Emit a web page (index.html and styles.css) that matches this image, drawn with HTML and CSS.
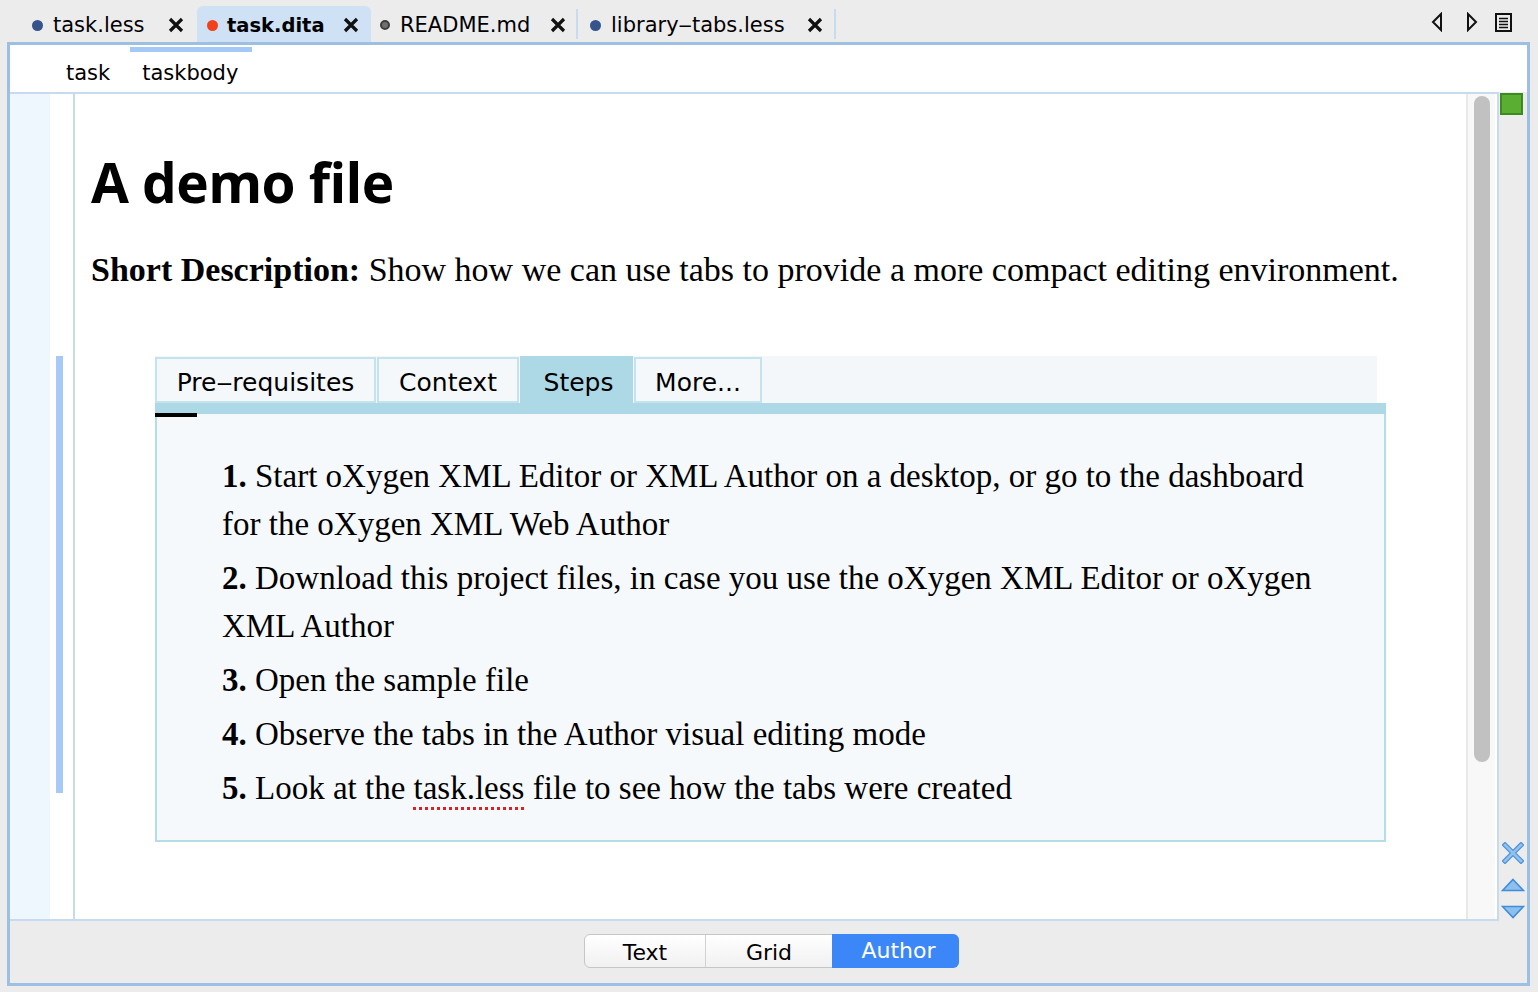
FILE: index.html
```html
<!DOCTYPE html>
<html>
<head>
<meta charset="utf-8">
<link rel="stylesheet" href="styles.css">
</head>
<body>
<div class="topbar">
  <div class="doctabs">
    <div class="doctab t1"><span class="dot dot-blue"></span><span class="name">task.less</span><svg class="close" width="16" height="16" viewBox="0 0 16 16"><path d="M2 2L14 14M14 2L2 14" stroke="#111" stroke-width="3.2"/></svg></div>
    <div class="doctab t2 active"><span class="dot dot-red"></span><span class="name">task.dita</span><svg class="close" width="16" height="16" viewBox="0 0 16 16"><path d="M2 2L14 14M14 2L2 14" stroke="#111" stroke-width="3.2"/></svg></div>
    <div class="doctab t3"><span class="dot dot-gray"></span><span class="name">README.md</span><svg class="close" width="16" height="16" viewBox="0 0 16 16"><path d="M2 2L14 14M14 2L2 14" stroke="#111" stroke-width="3.2"/></svg></div>
    <div class="doctab t4"><span class="dot dot-blue"></span><span class="name">library‒tabs.less</span><svg class="close" width="16" height="16" viewBox="0 0 16 16"><path d="M2 2L14 14M14 2L2 14" stroke="#111" stroke-width="3.2"/></svg></div>
  </div>
  <div class="navicons">
    <svg width="14" height="20" viewBox="0 0 14 20"><path d="M11 2L3 10L11 18Z" fill="none" stroke="#111" stroke-width="2" stroke-linejoin="miter"/></svg>
    <svg width="14" height="20" viewBox="0 0 14 20"><path d="M3 2L11 10L3 18Z" fill="none" stroke="#111" stroke-width="2" stroke-linejoin="miter"/></svg>
    <svg width="17" height="19" viewBox="0 0 17 19"><rect x="1" y="1" width="15" height="17" fill="none" stroke="#111" stroke-width="2"/><path d="M4 5.5H13M4 8.5H13M4 11.5H13M4 14.5H13" stroke="#111" stroke-width="1.6"/></svg>
  </div>
</div>

<div class="frame">
  <div class="crumbs">
    <span class="crumb">task</span>
    <span class="crumb crumb-active">taskbody</span>
  </div>
  <div class="work">
    <div class="maincol">
      <div class="editor">
        <div class="gutter"></div>
        <div class="gutter2"><div class="scope-mark"></div></div>
        <div class="content">
          <h1 class="title">A demo file</h1>
          <p class="shortdesc"><b>Short Description:</b> Show how we can use tabs to provide a more compact editing environment.</p>
          <div class="tabset">
            <div class="tabstrip">
              <div class="ptab ptab-1">Pre‒requisites</div>
              <div class="ptab ptab-2">Context</div>
              <div class="ptab ptab-3 ptab-active">Steps</div>
              <div class="ptab ptab-4">More...</div>
            </div>
            <div class="tabbar"><span class="tabbar-mark"></span></div>
            <div class="panel">
              <ol class="steps">
                <li><b>1.</b> Start oXygen XML Editor or XML Author on a desktop, or go to the dashboard for the oXygen XML Web Author</li>
                <li><b>2.</b> Download this project files, in case you use the oXygen XML Editor or oXygen XML Author</li>
                <li><b>3.</b> Open the sample file</li>
                <li><b>4.</b> Observe the tabs in the Author visual editing mode</li>
                <li><b>5.</b> Look at the <span class="spell">task.less</span> file to see how the tabs were created</li>
              </ol>
            </div>
          </div>
        </div>
        <div class="vscroll"><div class="thumb"></div></div>
      </div>
      <div class="modebar">
        <div class="seg">
          <span class="seg-item seg-text">Text</span>
          <span class="seg-item seg-grid">Grid</span>
          <span class="seg-item seg-author">Author</span>
        </div>
      </div>
    </div>
    <div class="sidepanel">
      <div class="okbox"></div>
      <div class="sideicons">
        <svg class="ico-x" width="22" height="22" viewBox="0 0 22 22"><path d="M3 3L19 19M19 3L3 19" stroke="#4f92d6" stroke-width="5" stroke-linecap="square"/><path d="M3 3L19 19M19 3L3 19" stroke="#90c1ef" stroke-width="2.6" stroke-linecap="square"/></svg>
        <svg class="ico-up" width="24" height="14" viewBox="0 0 24 14"><path d="M12 1.5L22.5 12.5H1.5Z" fill="#8ec0ee" stroke="#3f8cdb" stroke-width="1.6"/></svg>
        <svg class="ico-down" width="24" height="14" viewBox="0 0 24 14"><path d="M1.5 1.5H22.5L12 12.5Z" fill="#8ec0ee" stroke="#3f8cdb" stroke-width="1.6"/></svg>
      </div>
    </div>
  </div>
</div>
</body>
</html>
```

FILE: styles.css
```css
* { box-sizing: border-box; }
html, body { margin: 0; padding: 0; }
body {
  width: 1538px;
  height: 992px;
  overflow: hidden;
  background: #ececec;
  font-family: "DejaVu Sans", sans-serif;
  color: #000;
}

/* ---------- top document tabs ---------- */
.topbar {
  height: 42px;
  display: flex;
  justify-content: space-between;
  align-items: flex-end;
  padding-left: 23px;
  padding-right: 26px;
}
.doctabs { display: flex; align-items: flex-end; height: 42px; }
.doctab {
  height: 36px;
  display: flex;
  align-items: center;
  font-size: 21px;
  position: relative;
  padding-top: 2px;
}
.doctab .name { margin-left: 10px; }
.doctab .close { margin-left: auto; flex: none; }
.t1 { width: 174px; padding-left: 9px; padding-right: 13px; }
.t2 { width: 174px; padding-left: 10px; padding-right: 12px; }
.t3 { width: 207px; padding-left: 9px; padding-right: 10px; border-right: 2px solid #c9dcee; }
.t4 { width: 258px; padding-left: 12px; padding-right: 11px; border-right: 2px solid #c9dcee; }
.t3, .t4 { height: 30px; margin-bottom: 3px; }
.active {
  background: #cfe1f5;
  border-radius: 6px 6px 0 0;
}
.active .name { font-weight: bold; font-size: 19.5px; margin-left: 9px; }
.dot {
  display: block;
  width: 11px;
  height: 11px;
  min-width: 11px;
  border-radius: 50%;
  flex: none;
}
.dot-blue { background: #34548b; }
.dot-red { background: #f2421b; }
.dot-gray { background: #707070; border: 2px solid #3d3d3d; width: 10px; height: 10px; min-width: 10px; }

.navicons {
  display: flex;
  align-items: center;
  height: 42px;
  padding-top: 2px;
}
.navicons svg:nth-child(1) { margin-right: 21px; }
.navicons svg:nth-child(2) { margin-right: 16px; }

/* ---------- main frame ---------- */
.frame {
  margin-left: 7px;
  width: 1523px;
  height: 944px;
  border: 3px solid #9cbfe2;
  display: flex;
  flex-direction: column;
}
.crumbs {
  height: 47px;
  background: #fff;
  display: flex;
  align-items: flex-end;
  padding-left: 56px;
  padding-bottom: 7px;
  font-size: 21px;
}
.crumb { position: relative; }
.crumb-active { margin-left: 32px; }
.crumb-active::before {
  content: "";
  position: absolute;
  left: -12px;
  top: -14px;
  width: 122px;
  height: 5px;
  background: #a5c9f7;
}

.work { flex: 1; display: flex; }
.maincol { width: 1489px; display: flex; flex-direction: column; }
.editor {
  height: 829px;
  border-top: 2px solid #c6dbf0;
  border-right: 2px solid #c6dbf0;
  border-bottom: 2px solid #c6dbf0;
  display: flex;
  background: #fff;
}
.gutter { width: 40px; background: #eef6fe; flex: none; }
.gutter2 { width: 23px; flex: none; padding-top: 262px; padding-left: 6px; }
.scope-mark { width: 7px; height: 437px; background: #a6c9f7; }

.content {
  width: 1393px;
  flex: none;
  border-left: 2px solid #c6dbf0;
  padding-left: 16px;
  overflow: hidden;
}

.title {
  margin: 58px 0 0 0;
  font-family: "Open Sans", sans-serif;
  font-weight: 700;
  font-size: 55px;
  line-height: 60px;
  letter-spacing: -0.6px;
}
.shortdesc {
  margin: 38px 0 0 0;
  font-family: "Liberation Serif", serif;
  font-size: 34px;
  line-height: 40px;
}

.tabset { margin: 66px 0 0 64px; width: 1231px; }
.tabstrip {
  display: flex;
  gap: 1px;
  height: 47px;
  margin-right: 9px;
  background: #f3f7fa;
  align-items: flex-end;
}
.ptab {
  height: 46px;
  border: 2px solid #c4e3ec;
  background: #f4f8fb;
  font-size: 25px;
  display: flex;
  align-items: center;
  justify-content: center;
  padding-top: 5px;
}
.ptab-1 { width: 221px; }
.ptab-2 { width: 142px; }
.ptab-3 { width: 113px; padding-left: 4px; }
.ptab-4 { width: 128px; }
.ptab-active { background: #add8e6; border-color: #add8e6; height: 47px; }

.tabbar { height: 11px; background: #add8e6; position: relative; }
.tabbar-mark {
  position: absolute;
  left: 0;
  bottom: -3px;
  width: 42px;
  height: 4px;
  background: #000;
}
.panel {
  background: #f5f9fc;
  border: 2px solid #b6dce8;
  border-top: 0;
  padding: 38px 50px 28px 65px;
}
.steps {
  list-style: none;
  margin: 0;
  padding: 0;
  font-family: "Liberation Serif", serif;
  font-size: 33px;
  line-height: 48px;
}
.steps li { margin-bottom: 6px; }
.steps li:last-child { margin-bottom: 0; }
.spell {
  text-decoration: underline dotted #e02020;
  text-decoration-thickness: 3px;
  text-underline-offset: 8px;
}

.vscroll {
  width: 29px;
  flex: none;
  border-left: 2px solid #e8e8e8;
  background: #f8f8f8;
  padding: 2px 0 0 6px;
}
.thumb { width: 16px; height: 666px; background: #c1c1c1; border-radius: 8px; }

.modebar {
  flex: 1;
  padding: 13px 0 0 574px;
}
.seg {
  display: flex;
  width: 375px;
  height: 34px;
  border: 1px solid #c6c6c6;
  border-radius: 6px;
  background: linear-gradient(#ffffff, #f1f1f1);
  font-size: 22px;
}
.seg-item { display: flex; align-items: center; justify-content: center; padding-top: 2px; }
.seg-text { width: 121px; border-right: 1px solid #d2d2d2; }
.seg-grid { width: 126px; }
.seg-author {
  flex: 1;
  margin: -1px -1px -1px 0;
  background: #3b87f7;
  color: #fff;
  border-radius: 0 6px 6px 0;
  padding-top: 0;
  padding-bottom: 2px;
  padding-left: 6px;
}

.sidepanel {
  width: 28px;
  display: flex;
  flex-direction: column;
  align-items: flex-start;
  padding-bottom: 64px;
}
.okbox {
  margin-top: 1px;
  margin-left: 1px;
  width: 23px;
  height: 22px;
  background: #5aaf32;
  border: 2px solid #3b8a22;
}
.sideicons {
  margin-top: auto;
  width: 28px;
  display: flex;
  flex-direction: column;
  align-items: center;
}
.ico-x { margin-bottom: 14px; }
.ico-up { margin-bottom: 13px; }
```
